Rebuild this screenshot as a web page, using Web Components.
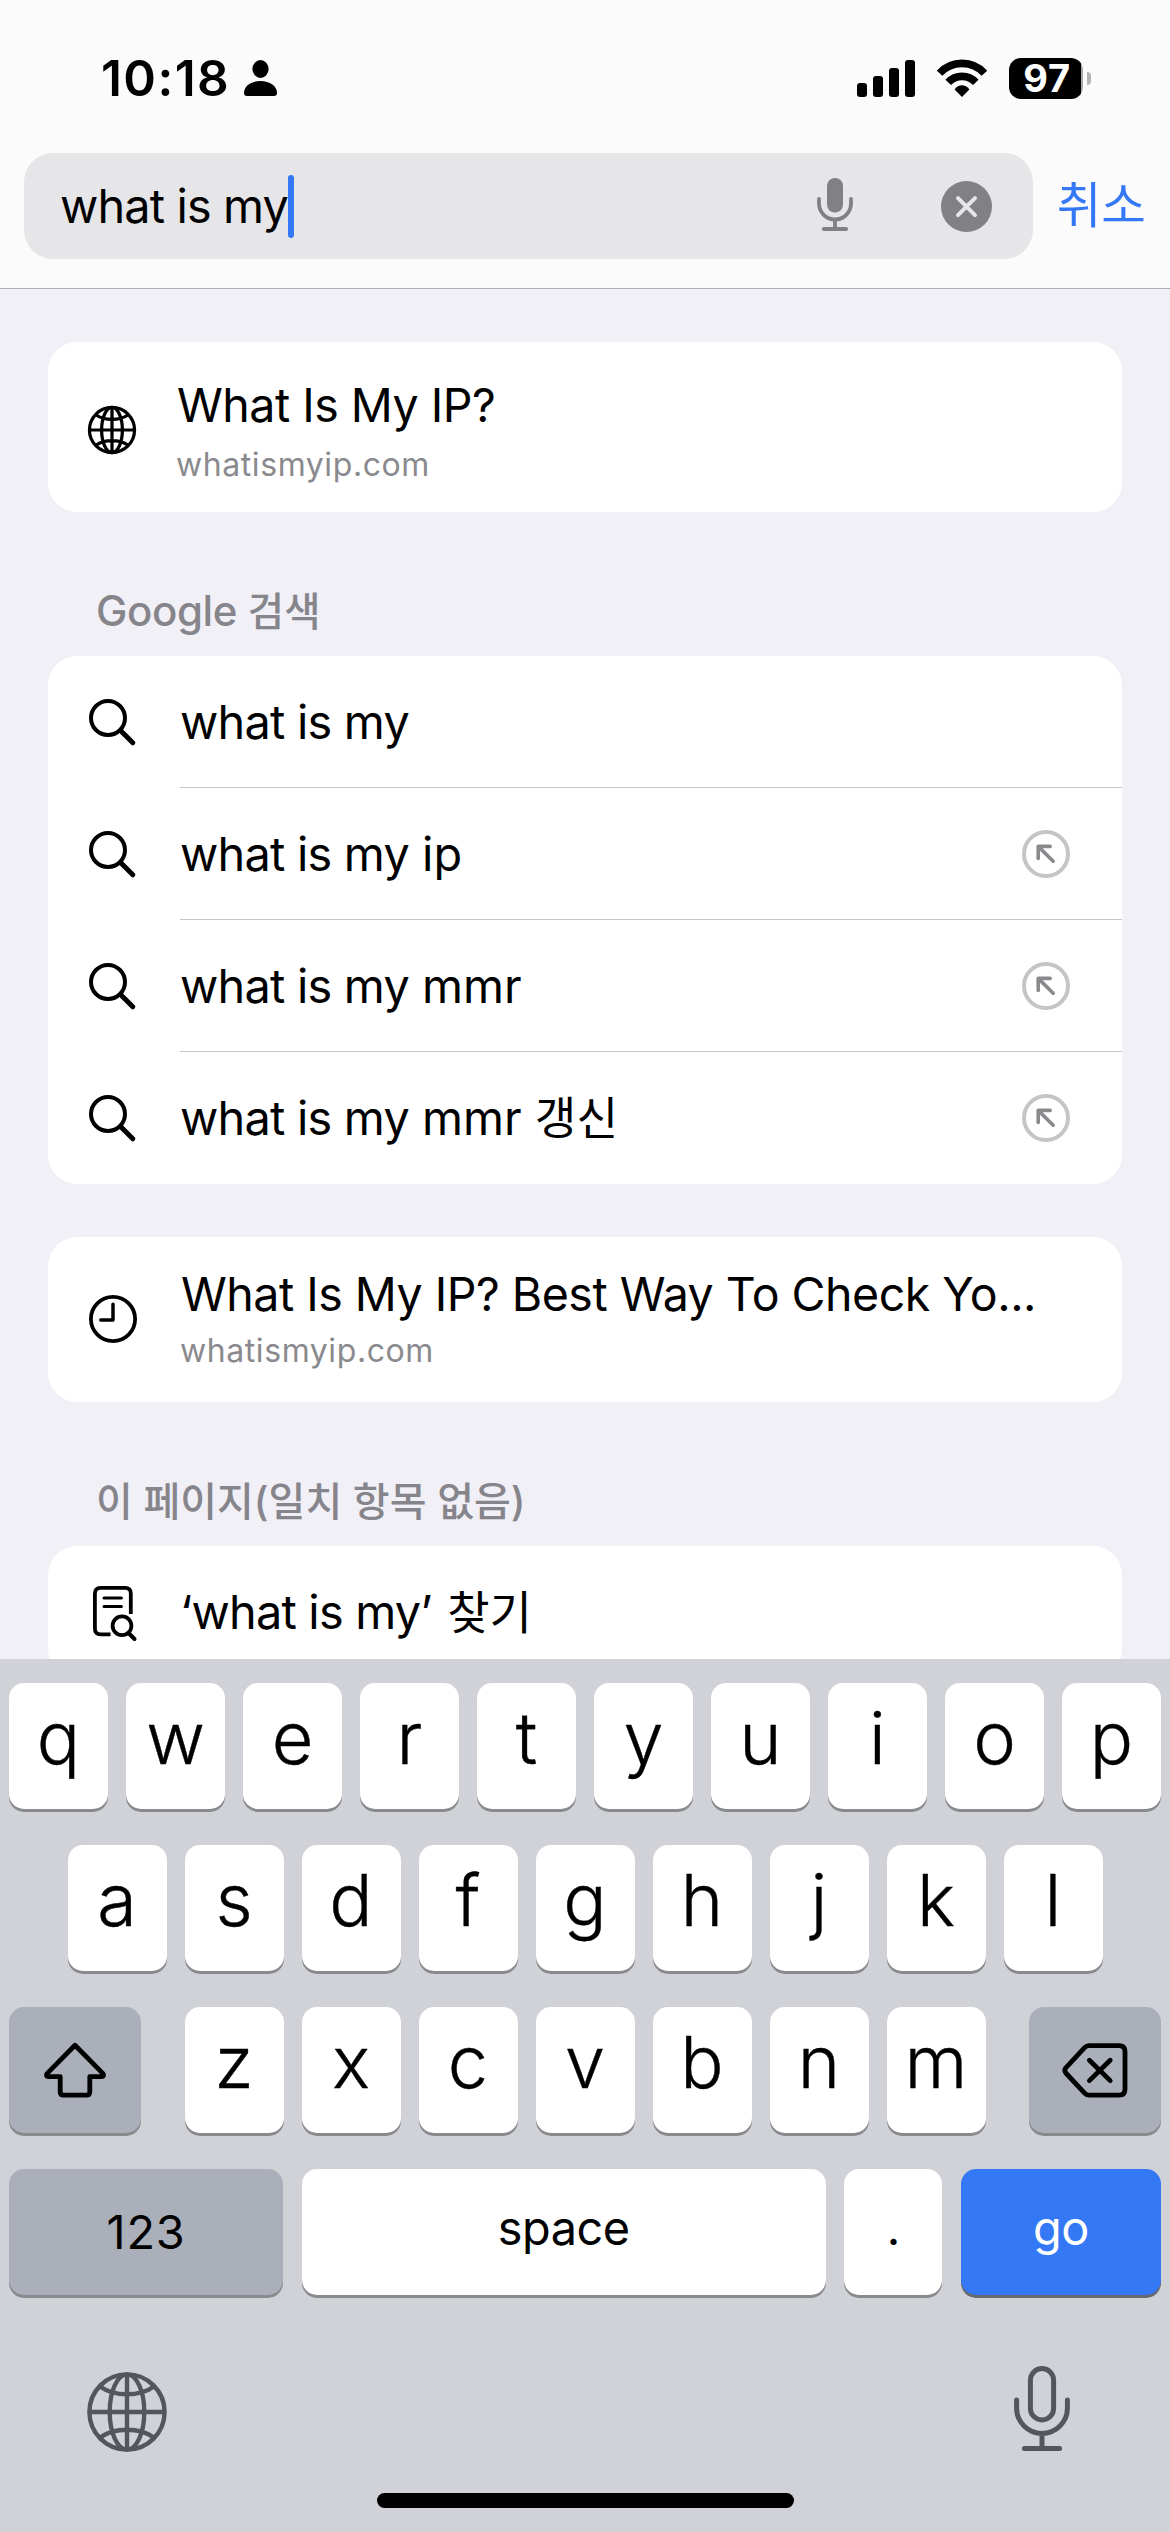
<!DOCTYPE html>
<html lang="ko">
<head>
<meta charset="utf-8">
<title>Safari search</title>
<style>
  html, body { margin: 0; padding: 0; }
  body { width: 1170px; height: 2532px; overflow: hidden; background: #f1f0f6; color: #000;
         font-family: Inter, "Noto Sans CJK KR", sans-serif; }
</style>
</head>
<body>
<search-screen></search-screen>

<script>
const define = (name, html) => {
  const template = document.createElement('template');
  template.innerHTML = html;
  customElements.define(name, class extends HTMLElement {
    constructor() {
      super();
      this.attachShadow({ mode: 'open' }).append(template.content.cloneNode(true));
    }
  });
};

/* ---- icons ---- */
const ICONS = {
  person: [33, 36, '<ellipse cx="16.5" cy="9" rx="8.1" ry="9"/><path d="M0 33C0 26 7 21 16.5 21S33 26 33 33C33 35 32 36 30 36H3C1 36 0 35 0 33Z"/>'],
  signal: [58, 37, '<rect y="23" width="10" height="14" rx="3"/><rect x="16" y="16" width="10" height="21" rx="3"/><rect x="32" y="8" width="10" height="29" rx="3"/><rect x="48" width="10" height="37" rx="3"/>'],
  wifi: [50, 37, '<g fill="none" stroke="currentColor" stroke-width="7.6"><path d="M2.6 13.2A30.4 30.4 0 0 1 47.4 13.2"/><path d="M11.2 22.4A18.8 18.8 0 0 1 38.8 22.4"/></g><path d="M25 37L17.6 29.6C19.6 26.6 22.4 25.3 25 25.3S30.4 26.6 32.4 29.6Z"/>'],
  micFill: [36, 53, '<rect x="10" width="16" height="34.5" rx="8"/><g fill="none" stroke="currentColor" stroke-width="3.8" stroke-linecap="round"><path d="M2 21V25.5A16 16 0 0 0 34 25.5V21M18 42V50M6.8 51H29.2"/></g>'],
  clear: [51, 51, '<circle cx="25.5" cy="25.5" r="25.5"/><path d="M17 17.2L34 34.2M34 17.2L17 34.2" fill="none" stroke="#e6e6e8" stroke-width="4" stroke-linecap="round"/>'],
  globe: [80, 80, '<g fill="none" stroke="currentColor" stroke-width="var(--stroke,4.4)"><circle cx="40" cy="40" r="37.6"/><ellipse cx="40" cy="40" rx="17.3" ry="37.6"/><path d="M40 3V77M3 40H77M13 14.5C20 19.5 29 22.3 40 22.3S60 19.5 67 14.5M13 65.5C20 60.5 29 57.7 40 57.7S60 60.5 67 65.5"/></g>'],
  search: [47, 47, '<g fill="none" stroke="currentColor" stroke-linecap="round"><circle cx="19" cy="19" r="17" stroke-width="4"/><path d="M32 32L43.8 43.8" stroke-width="5"/></g>'],
  fill: [48, 48, '<g fill="none" stroke-linecap="round" stroke-linejoin="round"><circle cx="24" cy="24" r="22" stroke="#c5c5c7" stroke-width="4"/><path d="M28.2 16.4H16.2V28.4M16.4 16.6L31.2 31.2" stroke="#8a8a8e" stroke-width="3.6"/></g>'],
  clock: [48, 48, '<g fill="none" stroke="currentColor" stroke-linecap="round" stroke-linejoin="round"><circle cx="24" cy="24" r="22.1" stroke-width="3.8"/><path d="M24 9.2V25H11.8" stroke-width="3.5"/></g>'],
  page: [44, 55, '<g fill="none" stroke="currentColor" stroke-width="3.8" stroke-linecap="round" stroke-linejoin="round"><path d="M17.5 48.4H7.5Q1.9 48.4 1.9 42.8V7.5Q1.9 1.9 7.5 1.9H32.2Q37.8 1.9 37.8 7.5V28" stroke-linecap="butt"/><path d="M11 12H28.4M11 20.4H28.4" stroke-width="3"/><circle cx="29" cy="39.8" r="9.4"/><path d="M36 47.5L41.5 53" stroke-width="4"/></g>'],
  shift: [64, 56, '<path d="M32 3.2L60 31.6Q61.5 34.6 58.5 34.6H46.8V50Q46.8 53.2 43.4 53.2H20.6Q17.2 53.2 17.2 50V34.6H5.5Q2.5 34.6 4 31.6Z" fill="none" stroke="currentColor" stroke-width="4.8" stroke-linejoin="round"/>'],
  erase: [66, 55, '<g fill="none" stroke="currentColor" stroke-width="4.8" stroke-linejoin="round" stroke-linecap="round"><path d="M27 2.6H57Q63 2.6 63 8.6V46.2Q63 52.2 57 52.2H27Q24.5 52.2 22.6 50.2L3.8 30Q1.6 27.4 3.8 24.8L22.6 4.6Q24.5 2.6 27 2.6Z"/><path d="M27.4 17.2L48.2 37.6M48.2 17.2L27.4 37.6"/></g>'],
  mic: [56, 86, '<g fill="none" stroke="currentColor" stroke-width="5" stroke-linecap="round"><rect x="16.4" y="2.6" width="23.2" height="51.4" rx="11.6"/><path d="M2.6 34V42A25.4 25.4 0 0 0 53.4 42V34M28 68V82M10.4 82.6H45.6"/></g>']
};
customElements.define('ui-icon', class extends HTMLElement {
  connectedCallback() {
    if (this.shadowRoot) return;
    const [w, h, body] = ICONS[this.getAttribute('name')];
    const size = this.getAttribute('size');
    const outW = size ? +size : w, outH = size ? h * size / w : h;
    this.attachShadow({ mode: 'open' }).innerHTML =
      `<style>:host{display:block;flex:none}svg{display:block;overflow:visible}</style>
       <svg width="${outW}" height="${outH}" viewBox="0 0 ${w} ${h}" fill="currentColor" aria-hidden="true">${body}</svg>`;
  }
});

/* ---- status bar ---- */
define('status-bar', `
<style>
  :host { display: flex; align-items: center; height: 150px; padding: 3px 79px 0 101px; }
  .time { font-size: 49.5px; font-weight: 600; letter-spacing: 1.42px; line-height: 60px; margin-right: 14px; }
  .right { display: flex; align-items: center; gap: 22px; margin-left: auto; }
  .battery { display: flex; align-items: center; gap: 4px; }
  .level { display: flex; justify-content: center; align-items: center; box-sizing: border-box; width: 74px; height: 41px; border-radius: 12px;
           background: linear-gradient(90deg, #000 72.5px, #a9a9ab 72.5px); color: #fff;
           font-size: 38px; font-weight: 700; line-height: 41px; letter-spacing: .8px; padding-left: 2px; }
  .cap { width: 4px; height: 13px; border-radius: 0 5px 5px 0; background: #b3b3b5; }
</style>
<span class="time">10:18</span><ui-icon name="person"></ui-icon>
<div class="right">
  <ui-icon name="signal"></ui-icon><ui-icon name="wifi"></ui-icon>
  <div class="battery"><div class="level">97</div><div class="cap"></div></div>
</div>`);

/* ---- address field ---- */
define('search-field', `
<style>
  :host { display: flex; align-items: center; height: 106px; padding: 0 24px 29px; }
  .field { display: flex; align-items: center; box-sizing: border-box; width: 1009px; height: 106px; padding: 0 41px 0 36px;
           border-radius: 29px; background: #e6e6e8; color: #808085; }
  .query { font-size: 46.8px; line-height: 60px; letter-spacing: -.85px; color: #000; white-space: pre; }
  .caret { width: 6px; height: 63px; border-radius: 3px; background: #3478f6; }
  .mic { margin: -3px 88px 0 auto; }
  .cancel { margin-left: 24px; font-size: 48.5px; line-height: 60px; color: #3478f6; white-space: nowrap; }
</style>
<div class="field">
  <span class="query">what is my</span><span class="caret"></span>
  <ui-icon class="mic" name="micFill"></ui-icon><ui-icon name="clear"></ui-icon>
</div>
<span class="cancel">취소</span>`);

/* ---- result list pieces ---- */
define('section-title', `
<style>
  :host { display: block; box-sizing: border-box; height: 144px; padding: 74px 48px 0; font-size: 42px; font-weight: 500;
          line-height: 50px; color: #86858b; white-space: nowrap; }
</style><slot></slot>`);

define('result-card', `
<style>:host { display: block; border-radius: 29px; background: #fff; overflow: hidden; }</style><slot></slot>`);

define('site-row', `
<style>
  :host { display: flex; box-sizing: border-box; height: var(--h); padding-left: 40px; }
  .icon { margin-top: var(--icon-top); width: 48px; }
  .text { display: flex; flex-direction: column; gap: var(--gap); padding-top: var(--top); margin-left: var(--indent); white-space: nowrap; }
  .title { font-size: 46.5px; line-height: 56px; letter-spacing: -.5px; }
  .url { font-size: 32px; line-height: 40px; letter-spacing: .58px; margin-left: -1px; color: #8a8a8e; }
</style>
<div class="icon"><slot name="icon"></slot></div>
<div class="text"><span class="title"><slot></slot></span><span class="url"><slot name="url"></slot></span></div>`);

define('suggest-row', `
<style>
  :host { display: flex; align-items: stretch; height: 132px; }
  .icon { display: flex; align-items: center; box-sizing: border-box; width: 132px; padding-left: var(--icon-left, 41px); flex: none; }
  .body { display: flex; align-items: center; flex: 1; padding: 0 52px 0 0; box-sizing: border-box;
          background: linear-gradient(#c6c6c8, #c6c6c8) 0 100% / 100% 1px no-repeat; }
  :host([last]) .body { background: none; }
  .label { flex: 1; font-size: 46.8px; line-height: 60px; letter-spacing: -.76px; white-space: pre; }
</style>
<div class="icon"><slot name="icon"><ui-icon name="search"></ui-icon></slot></div>
<div class="body"><span class="label"><slot></slot></span><slot name="action"></slot></div>`);

/* ---- keyboard ---- */
define('key-cap', `
<style>
  :host { display: flex; justify-content: center; align-items: flex-start; width: 99px; height: 126px; border-radius: 15px;
          background: #fff; box-shadow: 0 3px 0 #898a8d; font-size: 72px; font-weight: 300; line-height: 110px;
          -webkit-text-stroke: .4px currentColor; }
  :host([wide]) { font-size: 46.8px; font-weight: 400; line-height: 119px; letter-spacing: -.5px; -webkit-text-stroke: 0; }
  :host([tone=grey]) { background: #abafba; }
  :host([tone=blue]) { background: #3478f6; color: #fff; box-shadow: 0 3px 0 #68696d; }
</style><slot></slot>`);

customElements.define('key-row', class extends HTMLElement {
  connectedCallback() {
    if (this.shadowRoot) return;
    const caps = [...this.getAttribute('keys')].map(k => `<key-cap>${k}</key-cap>`).join('');
    this.attachShadow({ mode: 'open' }).innerHTML =
      `<style>:host{display:flex;justify-content:space-between}.caps{display:flex;gap:18px;margin:0 auto}</style>
       <slot name="start"></slot><div class="caps">${caps}</div><slot name="end"></slot>`;
  }
});

define('screen-keyboard', `
<style>
  :host { display: flex; flex-direction: column; box-sizing: border-box; height: 873px; padding: 24px 9px 0; background: #d1d2d7; }
  .rows { display: flex; flex-direction: column; gap: 36px; }
  .side { width: 132px; align-items: center; }
  .bottom { display: flex; justify-content: space-between; }
  .num { width: 274px; line-height: 127px; letter-spacing: .8px; }
  .space { width: 524px; } .dot { width: 98px; } .go { width: 200px; letter-spacing: -.3px; }
  .tools { display: flex; justify-content: space-between; padding: 71px 91px 0 78px; color: #53565c; }
  .globe { margin-top: 6px; }
  .home { width: 417px; height: 15px; border-radius: 8px; background: #000; margin: 41px auto 0; }
</style>
<div class="rows">
  <key-row keys="qwertyuiop"></key-row>
  <key-row keys="asdfghjkl"></key-row>
  <key-row keys="zxcvbnm">
    <key-cap class="side" slot="start" tone="grey"><ui-icon name="shift"></ui-icon></key-cap>
    <key-cap class="side" slot="end" tone="grey"><ui-icon name="erase"></ui-icon></key-cap>
  </key-row>
  <div class="bottom">
    <key-cap wide class="num" tone="grey">123</key-cap>
    <key-cap wide class="space">space</key-cap>
    <key-cap wide class="dot">.</key-cap>
    <key-cap wide class="go" tone="blue">go</key-cap>
  </div>
</div>
<div class="tools"><ui-icon class="globe" name="globe"></ui-icon><ui-icon name="mic"></ui-icon></div>
<div class="home"></div>`);

/* ---- page ---- */
define('search-screen', `
<style>
  :host { display: flex; flex-direction: column; width: 1170px; height: 2532px; }
  header { background: #fbfbfc; border-bottom: 1px solid #adadb2; }
  main { box-sizing: border-box; height: 1370px; padding: 53px 48px 0; overflow: hidden; }
  .top { --h: 170px; --icon-top: 64px; --top: 35px; --gap: 12px; --indent: 41px; }
  .history { --h: 165px; --icon-top: 58px; --top: 29px; --gap: 9px; --indent: 45px; }
  .gap { margin-bottom: 53px; }
  .globe { --stroke: 5.4; }
  .ko { font-size: 45.2px; letter-spacing: 0; }
  .seek { font-size: 46px; letter-spacing: 0; margin-left: 3px; }
  .find { --icon-left: 45px; }
  .h1 { font-size: 39.5px; }
  .h2 { font-size: 40px; padding-top: 75px; }
  .plain { letter-spacing: 0; }
</style>
<header><status-bar></status-bar><search-field></search-field></header>
<main>
  <result-card>
    <site-row class="top"><ui-icon class="globe" slot="icon" name="globe" size="48"></ui-icon>What Is My IP?<span slot="url">whatismyip.com</span></site-row>
  </result-card>
  <section-title><span style="letter-spacing:-.4px">Google </span><span class="h1">검색</span></section-title>
  <result-card class="gap">
    <suggest-row>what is my</suggest-row>
    <suggest-row>what is my<span class="plain"> ip</span><ui-icon slot="action" name="fill"></ui-icon></suggest-row>
    <suggest-row>what is my<span class="plain"> mmr</span><ui-icon slot="action" name="fill"></ui-icon></suggest-row>
    <suggest-row last>what is my<span class="plain"> mmr </span><span class="ko">갱신</span><ui-icon slot="action" name="fill"></ui-icon></suggest-row>
  </result-card>
  <result-card>
    <site-row class="history"><ui-icon slot="icon" name="clock" style="margin-left:1px"></ui-icon>What Is My IP? Best Way To Check Yo...<span slot="url">whatismyip.com</span></site-row>
  </result-card>
  <section-title class="h2">이 페이지(일치 항목 없음)</section-title>
  <result-card>
    <suggest-row last class="find"><ui-icon slot="icon" name="page" style="margin-top:3px"></ui-icon>‘what is my’ <span class="seek">찾기</span></suggest-row>
  </result-card>
</main>
<screen-keyboard></screen-keyboard>`);
</script>
</body>
</html>
